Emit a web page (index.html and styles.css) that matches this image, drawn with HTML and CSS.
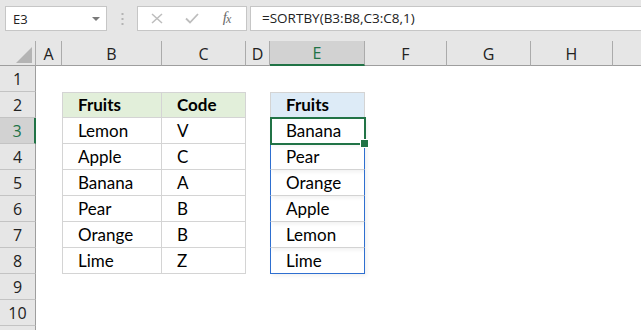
FILE: index.html
```html
<!DOCTYPE html>
<html>
<head>
<meta charset="utf-8">
<link rel="stylesheet" href="styles.css">
</head>
<body>
<div class="app">
  <div class="toolbar">
    <div class="namebox">
      <span class="nb-text">E3</span>
      <svg class="nb-arrow" width="8" height="4" viewBox="0 0 8 4"><path d="M0 0H8L4 4Z" fill="#7a7a7a"/></svg>
    </div>
    <div class="grip">
      <svg width="3" height="12" viewBox="0 0 3 12"><rect x="0.5" y="0" width="2" height="2" fill="#b4b4b4"/><rect x="0.5" y="5" width="2" height="2" fill="#b4b4b4"/><rect x="0.5" y="10" width="2" height="2" fill="#b4b4b4"/></svg>
    </div>
    <div class="fnbox">
      <div class="slot s1">
        <svg class="ic" width="12" height="11" viewBox="0 0 12 11"><line x1="1" y1="1" x2="11" y2="10" stroke="#bdbdbd" stroke-width="1.5"/><line x1="11" y1="1" x2="1" y2="10" stroke="#bdbdbd" stroke-width="1.5"/></svg>
      </div>
      <div class="slot s2">
        <svg class="ic" width="14" height="11" viewBox="0 0 14 11"><polyline points="1,5.5 5,9.5 13,1" stroke="#bdbdbd" stroke-width="1.8" fill="none"/></svg>
      </div>
      <div class="slot s3"><span class="fx">f<span class="fx-x">x</span></span></div>
    </div>
    <div class="formula">=SORTBY(B3:B8,C3:C8,1)</div>
  </div>

  <div class="sheet">
    <div class="corner"><span class="tri"></span></div>
    <div class="ch">A</div>
    <div class="ch">B</div>
    <div class="ch">C</div>
    <div class="ch">D</div>
    <div class="ch sel">E</div>
    <div class="ch">F</div>
    <div class="ch">G</div>
    <div class="ch">H</div>
    <div class="ch last"></div>

    <div class="rh">1</div><div></div><div></div><div></div><div></div><div></div><div></div><div></div><div></div><div></div>

    <div class="rh">2</div><div></div>
    <div class="c t-top t-left hd-g">Fruits</div>
    <div class="c t-top hd-g">Code</div>
    <div></div>
    <div class="c t-top t-left hd-b">Fruits</div>
    <div></div><div></div><div></div><div></div>

    <div class="rh sel">3</div><div></div>
    <div class="c t-left">Lemon</div>
    <div class="c">V</div>
    <div></div>
    <div class="c sp active">Banana</div>
    <div></div><div></div><div></div><div></div>

    <div class="rh">4</div><div></div>
    <div class="c t-left">Apple</div>
    <div class="c">C</div>
    <div></div>
    <div class="c sp">Pear</div>
    <div></div><div></div><div></div><div></div>

    <div class="rh">5</div><div></div>
    <div class="c t-left">Banana</div>
    <div class="c">A</div>
    <div></div>
    <div class="c sp">Orange</div>
    <div></div><div></div><div></div><div></div>

    <div class="rh">6</div><div></div>
    <div class="c t-left">Pear</div>
    <div class="c">B</div>
    <div></div>
    <div class="c sp">Apple</div>
    <div></div><div></div><div></div><div></div>

    <div class="rh">7</div><div></div>
    <div class="c t-left">Orange</div>
    <div class="c">B</div>
    <div></div>
    <div class="c sp">Lemon</div>
    <div></div><div></div><div></div><div></div>

    <div class="rh">8</div><div></div>
    <div class="c t-left">Lime</div>
    <div class="c">Z</div>
    <div></div>
    <div class="c sp sp-end">Lime</div>
    <div></div><div></div><div></div><div></div>

    <div class="rh">9</div><div></div><div></div><div></div><div></div><div></div><div></div><div></div><div></div><div></div>
    <div class="rh">10</div><div></div><div></div><div></div><div></div><div></div><div></div><div></div><div></div><div></div>
    <div class="rh"></div><div></div><div></div><div></div><div></div><div></div><div></div><div></div><div></div><div></div>
  </div>
</div>
</body>
</html>
```

FILE: styles.css
```css
* { box-sizing: border-box; }
html, body {
  margin: 0;
  padding: 0;
  width: 641px;
  height: 330px;
  overflow: hidden;
  background: #ffffff;
}
.app {
  width: 641px;
  height: 330px;
  overflow: hidden;
}

/* ---------- toolbar ---------- */
.toolbar {
  height: 41px;
  background: #e6e6e6;
  display: flex;
  align-items: flex-start;
  padding-top: 6px;
  padding-left: 5px;
}
.namebox {
  flex: none;
  width: 102px;
  height: 25px;
  background: #fff;
  border: 1px solid #c6c6c6;
  display: flex;
  align-items: center;
  justify-content: space-between;
  padding: 0 6px 0 7px;
  font-family: "Open Sans", "Noto Sans", sans-serif;
  font-size: 13px;
  color: #222;
}
.nb-arrow { margin-top: 1px; }
.grip {
  flex: none;
  width: 30px;
  height: 25px;
  display: flex;
  align-items: center;
  justify-content: center;
}
.fnbox {
  flex: none;
  width: 110px;
  height: 25px;
  background: #fff;
  border: 1px solid #c6c6c6;
  display: flex;
  align-items: center;
}
.slot {
  height: 23px;
  display: flex;
  align-items: center;
  justify-content: center;
}
.s1 { width: 35px; padding-left: 2px; }
.s2 { width: 38px; }
.s3 { width: 35px; padding-right: 4px; }
.ic { flex: none; display: block; width: auto; }
.fx {
  font-family: "Liberation Serif", "DejaVu Serif", serif;
  font-style: italic;
  font-size: 15px;
  color: #6a6a6a;
  letter-spacing: -1px;
  margin-top: -2px;
}
.fx-x { font-size: 12px; position: relative; top: 1px; }
.formula {
  flex: 1;
  margin-left: 3px;
  height: 25px;
  background: #fff;
  border: 1px solid #c6c6c6;
  border-right: none;
  font-family: "Open Sans", "Noto Sans", sans-serif;
  font-size: 13.5px;
  color: #222;
  line-height: 23px;
  padding-left: 11px;
}

/* ---------- sheet ---------- */
.sheet {
  display: grid;
  grid-template-columns: 36px 26px 100px 84px 24px 95px 82px 84px 82px 1fr;
  grid-template-rows: 25px repeat(11, 26px);
  background: #fff;
}
.corner {
  background: #e6e6e6;
  border-right: 1px solid #ababab;
  border-bottom: 1px solid #9e9e9e;
  position: relative;
}
.tri {
  position: absolute;
  right: 3px;
  bottom: 2px;
  width: 0;
  height: 0;
  border-left: 16px solid transparent;
  border-bottom: 16px solid #b4b4b4;
}
.ch {
  background: #e6e6e6;
  border-right: 1px solid #ababab;
  border-bottom: 1px solid #9e9e9e;
  font-family: "Open Sans", "Noto Sans", sans-serif;
  font-size: 16px;
  color: #222;
  display: flex;
  align-items: center;
  justify-content: center;
  padding-top: 1px;
}
.ch.last { border-right: none; }
.ch.sel {
  background: #d2d2d2;
  color: #217346;
  border-bottom: 2px solid #217346;
}
.rh {
  background: #e6e6e6;
  border-right: 1px solid #9e9e9e;
  border-bottom: 1px solid #c3c3c3;
  font-family: "Open Sans", "Noto Sans", sans-serif;
  font-size: 16px;
  color: #222;
  display: flex;
  align-items: center;
  justify-content: center;
}
.rh.sel {
  background: #d2d2d2;
  color: #217346;
  border-right: 2px solid #217346;
}

/* ---------- cells ---------- */
.c {
  font-family: Lato, "Open Sans", sans-serif;
  font-size: 17px;
  color: #000;
  padding-left: 15px;
  line-height: 26px;
  border-right: 1px solid #d4d4d4;
  border-bottom: 1px solid #d4d4d4;
  white-space: nowrap;
}
.t-top { border-top: 1px solid #d4d4d4; line-height: 24px; }
.t-left { border-left: 1px solid #d4d4d4; }
.hd-g { background: #e2efda; font-weight: bold; }
.hd-b { background: #ddebf7; font-weight: bold; }
.sp {
  border-left: 1px solid #2e6fd0;
  border-right: 1px solid #2e6fd0;
  box-shadow: 2px 2px 4px rgba(0,0,0,0.06);
}
.sp-end { border-bottom: 1px solid #2e6fd0; }
.active { position: relative; }
.active::after {
  content: "";
  position: absolute;
  left: -1px;
  top: -1px;
  right: -2px;
  bottom: -2px;
  border: 2px solid #217346;
}
.active::before {
  content: "";
  position: absolute;
  right: -5px;
  bottom: -5px;
  width: 7px;
  height: 7px;
  background: #217346;
  border: 1px solid #fff;
  z-index: 2;
}
```
